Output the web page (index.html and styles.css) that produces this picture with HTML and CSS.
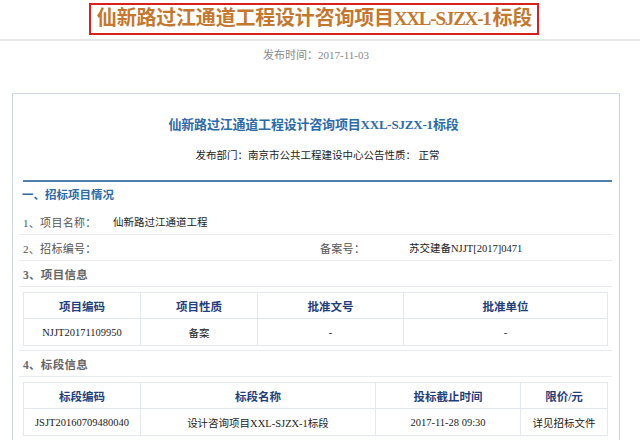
FILE: index.html
```html
<!DOCTYPE html>
<html lang="zh-CN">
<head>
    <meta charset="UTF-8">
    <title>仙新路过江通道工程设计咨询项目XXL-SJZX-1标段</title>
    <link rel="stylesheet" href="styles.css">
</head>
<body>

    <div class="page-head">
        <h1 class="page-title">仙新路过江通道工程设计咨询项目<span class="latin">XXL-SJZX-1</span>标段</h1>
    </div>
    <div class="pub-time">发布时间：2017-11-03</div>

    <div class="notice">
        <h2 class="notice-title">仙新路过江通道工程设计咨询项目XXL-SJZX-1标段</h2>
        <div class="notice-meta">发布部门：南京市公共工程建设中心公告性质： 正常</div>

        <div class="section-head">一、招标项目情况</div>

        <div class="row">
            <span class="label">1、项目名称：</span>
            <span class="value">仙新路过江通道工程</span>
        </div>
        <div class="row row-split">
            <span class="label">2、招标编号：</span>
            <span class="value"></span>
            <span class="label">备案号：</span>
            <span class="value">苏交建备NJJT[2017]0471</span>
        </div>
        <div class="row">
            <span class="label sub">3、项目信息</span>
        </div>

        <div class="table-wrap">
            <table class="info">
                <colgroup>
                    <col style="width: 117px">
                    <col style="width: 117px">
                    <col style="width: 146px">
                    <col>
                </colgroup>
                <tr>
                    <th>项目编码</th>
                    <th>项目性质</th>
                    <th>批准文号</th>
                    <th>批准单位</th>
                </tr>
                <tr>
                    <td>NJJT20171109950</td>
                    <td>备案</td>
                    <td>-</td>
                    <td>-</td>
                </tr>
            </table>
        </div>

        <div class="row">
            <span class="label sub">4、标段信息</span>
        </div>

        <div class="table-wrap">
            <table class="info">
                <colgroup>
                    <col style="width: 117px">
                    <col style="width: 235px">
                    <col style="width: 145px">
                    <col>
                </colgroup>
                <tr>
                    <th>标段编码</th>
                    <th>标段名称</th>
                    <th>投标截止时间</th>
                    <th>限价/元</th>
                </tr>
                <tr>
                    <td>JSJT20160709480040</td>
                    <td>设计咨询项目XXL-SJZX-1标段</td>
                    <td>2017-11-28 09:30</td>
                    <td>详见招标文件</td>
                </tr>
            </table>
        </div>
    </div>

</body>
</html>
```

FILE: styles.css
```css
* {
    margin: 0;
    padding: 0;
    box-sizing: border-box;
}

body {
    font-family: 'Liberation Serif', 'Noto Sans CJK SC', sans-serif;
    background: #fff;
    color: #333;
    overflow: hidden;
}

.page-head {
    display: flex;
    justify-content: center;
    padding-top: 3px;
    height: 41px;
    border-bottom: 2px solid #e6e6e6;
}

.page-title {
    border: 2px solid #d8231c;
    height: 32px;
    padding: 0 5px 0 6px;
    color: #c4782f;
    font-size: 20px;
    font-weight: bold;
    line-height: 27px;
    letter-spacing: -0.2px;
    margin-left: -12px;
}

.page-title .latin {
    font-size: 19px;
    letter-spacing: -1.2px;
    margin-right: 2px;
}

.pub-time {
    text-align: center;
    font-size: 11px;
    color: #888;
    line-height: 14px;
    margin-top: 7px;
    margin-left: -8px;
}

.notice {
    margin: 31px 20px 0 12px;
    border: 1px solid #cdd6e2;
    border-bottom: none;
    padding: 0 7px 0 6px;
    height: 347px;
}

.notice-title {
    text-align: center;
    color: #2d6aa8;
    font-size: 13px;
    font-weight: bold;
    line-height: 16px;
    padding-top: 23px;
    margin-left: -4px;
    letter-spacing: -0.2px;
}

.notice-meta {
    text-align: center;
    font-size: 10.5px;
    color: #222;
    line-height: 14px;
    margin-top: 16px;
    margin-left: 4px;
    padding-bottom: 17px;
    border-bottom: 2px solid #4f7fae;
}

.section-head {
    color: #2d6aa8;
    font-size: 11.5px;
    font-weight: bold;
    line-height: 27px;
    padding-left: 3px;
}

.row {
    display: grid;
    grid-template-columns: 90px 1fr;
    align-items: center;
    height: 26px;
    padding-left: 4px;
    border-bottom: 1px solid #e8ecf0;
    font-size: 11px;
}

.row-split {
    grid-template-columns: 90px 207px 89px 1fr;
}

.label {
    color: #555;
    letter-spacing: 0.3px;
}

.label.sub {
    color: #666;
    font-weight: bold;
    font-size: 11.5px;
    white-space: nowrap;
}

.value {
    color: #222;
    font-size: 10.5px;
}

.table-wrap {
    padding: 5px 4px 4px;
    border-bottom: 1px solid #e8ecf0;
}

.info {
    width: 585px;
    border-collapse: collapse;
    table-layout: fixed;
    border: 1px solid #dfe5ec;
}

.info th,
.info td {
    border: 1px solid #e3e8ee;
    text-align: center;
    height: 27px;
}

.info th {
    color: #1f3f7c;
    font-size: 11.5px;
    font-weight: bold;
    height: 26px;
}

.info td {
    color: #222;
    font-size: 10.5px;
}
```
